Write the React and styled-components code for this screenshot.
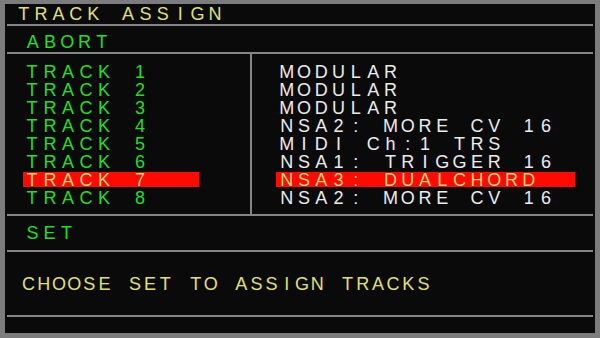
import styled, { createGlobalStyle } from 'styled-components';

const GlobalStyle = createGlobalStyle`
  html, body {
    margin: 0;
    padding: 0;
    background: #0a0a0a;
  }
`;

const COLORS = {
  bg: '#0a0a0a',
  line: '#858585',
  frame: '#7c7c7c',
  yellow: '#e2e074',
  green: '#20df20',
  white: '#ececec',
  red: '#ff0a00',
  selText: '#f2d27a',
};

const Screen = styled.div`
  box-sizing: border-box;
  width: 600px;
  height: 338px;
  background: ${COLORS.bg};
  border-style: solid;
  border-color: ${COLORS.frame};
  border-width: 4px 5px 5px 5px;
  padding: 0 2px;
  display: flex;
  flex-direction: column;
  font-family: "Liberation Sans", Arial, sans-serif;
  font-size: 18px;
  white-space: nowrap;
  overflow: hidden;
`;

// the panel font is fixed-pitch, so every glyph sits centred in its own cell
const Cell = styled.span`
  display: inline-block;
  width: ${(p) => p.pitch}px;
  text-align: center;
`;

const Mono = ({ text, pitch }) => (
  <>
    {text.split('').map((ch, i) => (
      <Cell key={i} pitch={pitch}>
        {ch === ' ' ? '\u00a0' : ch}
      </Cell>
    ))}
  </>
);

const Section = styled.div`
  box-sizing: border-box;
  flex: 0 0 ${(p) => p.h}px;
  border-bottom: ${(p) => (p.last ? 'none' : `2px solid ${COLORS.line}`)};
`;

const Title = styled(Section)`
  color: ${COLORS.yellow};
  line-height: 20px;
  padding-left: 8px;
`;

const Action = styled(Section)`
  color: ${COLORS.green};
  line-height: 18px;
  padding: ${(p) => p.top}px 0 0 ${(p) => p.left}px;
`;

const Message = styled(Section)`
  color: ${COLORS.yellow};
  line-height: 18px;
  padding: 23px 0 0 14px;
`;

const Body = styled(Section)`
  display: flex;
`;

const Column = styled.div`
  box-sizing: border-box;
  display: flex;
  flex-direction: column;
  padding-top: 9px;
  ${(p) =>
    p.left
      ? `width: 245px; padding-left: 16px; border-right: 2px solid ${COLORS.line};`
      : `flex: 1; padding-left: 24px;`}
`;

const Row = styled.div`
  height: 18px;
  line-height: 18px;
  padding-left: ${(p) => p.indent}px;
  width: ${(p) => p.w}px;
  color: ${(p) => (p.selected ? COLORS.selText : p.color)};
  background: ${(p) =>
    p.selected
      ? `linear-gradient(${COLORS.red}, ${COLORS.red}) 0 1px / 100% 15px no-repeat`
      : 'none'};
`;

const tracks = [
  'MODULAR',
  'MODULAR',
  'MODULAR',
  'NSA2: MORE CV 16',
  'MIDI Ch:1 TRS',
  'NSA1: TRIGGER 16',
  'NSA3: DUALCHORD',
  'NSA2: MORE CV 16',
];

const selected = 6;

export default function App() {
  return (
    <>
      <GlobalStyle />
      <Screen>
        <Title h={22}>
          <Mono text="TRACK ASSIGN" pitch={17.4} />
        </Title>
        <Action h={28} top={7} left={17}>
          <Mono text="ABORT" pitch={17.3} />
        </Action>
        <Body h={162}>
          <Column left>
            {tracks.map((_, i) => (
              <Row key={i} w={176} indent={0} color={COLORS.green} selected={i === selected}>
                <Mono text={`TRACK ${i + 1}`} pitch={18} />
              </Row>
            ))}
          </Column>
          <Column>
            {tracks.map((t, i) => (
              <Row key={i} w={297} indent={2} color={COLORS.white} selected={i === selected}>
                <Mono text={t} pitch={17.3} />
              </Row>
            ))}
          </Column>
        </Body>
        <Action h={36} top={8} left={17}>
          <Mono text="SET" pitch={17} />
        </Action>
        <Message h={65}>
          <Mono text="CHOOSE SET TO ASSIGN TRACKS" pitch={15.2} />
        </Message>
        <Section h={16} last />
      </Screen>
    </>
  );
}
